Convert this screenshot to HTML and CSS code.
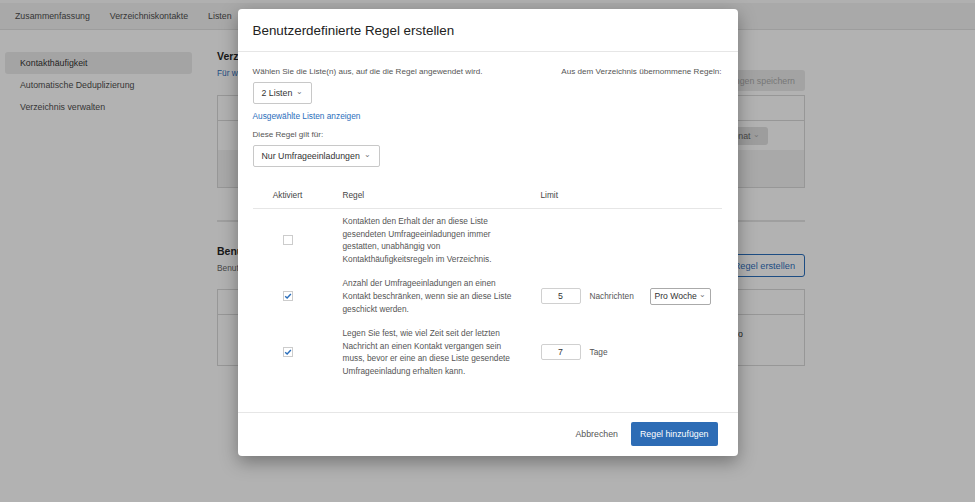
FILE: index.html
```html
<!DOCTYPE html>
<html lang="de">
<head>
    <meta charset="UTF-8">
    <meta name="viewport" content="width=device-width, initial-scale=1.0">
    <title>Kontakthäufigkeit</title>
    <link rel="stylesheet" href="styles.css">
</head>
<body>
    <!-- page behind the dialog, colours already dimmed by the backdrop -->
    <div class="app">
        <nav class="tabs">
            <a>Zusammenfassung</a>
            <a>Verzeichniskontakte</a>
            <a>Listen</a>
            <a>Segmente</a>
        </nav>
        <div class="layout">
            <aside class="sidebar">
                <a class="active">Kontakthäufigkeit</a>
                <a>Automatische Deduplizierung</a>
                <a>Verzeichnis verwalten</a>
            </aside>
            <main class="content">
                <section class="panel">
                    <div class="panel-head">
                        <div class="head-text">
                            <h2>Verzeichnisregeln</h2>
                            <a class="link">Für wen</a>
                        </div>
                        <button class="btn-muted" disabled>Änderungen speichern</button>
                    </div>
                    <div class="box">
                        <div class="box-head"></div>
                        <div class="box-row"><span class="pill">Pro Monat <span class="chev">&#8964;</span></span></div>
                        <div class="box-foot"></div>
                    </div>
                </section>
                <hr class="sep">
                <section class="panel">
                    <div class="panel-head second">
                        <div class="head-text">
                            <h2>Benutzerdefinierte Regeln</h2>
                            <p class="sub">Benutzerdefiniert</p>
                        </div>
                        <button class="btn-outline">Benutzerdefinierte Regel erstellen</button>
                    </div>
                    <div class="box">
                        <div class="box-head"></div>
                        <div class="box-row tall"><span class="cell-end">pro</span></div>
                    </div>
                </section>
            </main>
        </div>
    </div>

    <div class="overlay">
        <div class="modal">
            <div class="modal-head">Benutzerdefinierte Regel erstellen</div>
            <div class="modal-body">
                <div class="top-row">
                    <span class="label">Wählen Sie die Liste(n) aus, auf die die Regel angewendet wird.</span>
                    <span class="label">Aus dem Verzeichnis übernommene Regeln:</span>
                </div>
                <button class="dropdown">2 Listen <span class="chev">&#8964;</span></button>
                <a class="link show-lists">Ausgewählte Listen anzeigen</a>
                <div class="label applies">Diese Regel gilt für:</div>
                <button class="dropdown">Nur Umfrageeinladungen <span class="chev">&#8964;</span></button>

                <div class="rules">
                    <div class="rules-head">
                        <span class="col-check">Aktiviert</span>
                        <span class="col-rule">Regel</span>
                        <span class="col-limit">Limit</span>
                    </div>
                    <div class="rule">
                        <span class="col-check"><span class="checkbox"></span></span>
                        <span class="col-rule">Kontakten den Erhalt der an diese Liste gesendeten Umfrageeinladungen immer gestatten, unabhängig von Kontakthäufigkeitsregeln im Verzeichnis.</span>
                        <span class="col-limit"></span>
                    </div>
                    <div class="rule">
                        <span class="col-check"><span class="checkbox checked"><svg viewBox="0 0 10 10" width="10" height="10"><path d="M2.2 5.3 L4.1 7.1 L7.9 3" fill="none" stroke="#2a6ebb" stroke-width="1.4"/></svg></span></span>
                        <span class="col-rule">Anzahl der Umfrageeinladungen an einen Kontakt beschränken, wenn sie an diese Liste geschickt werden.</span>
                        <span class="col-limit">
                            <span class="num">5</span>
                            <span class="unit">Nachrichten</span>
                            <button class="dropdown small">Pro Woche <span class="chev">&#8964;</span></button>
                        </span>
                    </div>
                    <div class="rule">
                        <span class="col-check"><span class="checkbox checked"><svg viewBox="0 0 10 10" width="10" height="10"><path d="M2.2 5.3 L4.1 7.1 L7.9 3" fill="none" stroke="#2a6ebb" stroke-width="1.4"/></svg></span></span>
                        <span class="col-rule">Legen Sie fest, wie viel Zeit seit der letzten Nachricht an einen Kontakt vergangen sein muss, bevor er eine an diese Liste gesendete Umfrageeinladung erhalten kann.</span>
                        <span class="col-limit">
                            <span class="num">7</span>
                            <span class="unit">Tage</span>
                        </span>
                    </div>
                </div>
            </div>
            <div class="modal-foot">
                <button class="btn-text">Abbrechen</button>
                <button class="btn-primary">Regel hinzufügen</button>
            </div>
        </div>
    </div>
</body>
</html>
```

FILE: styles.css
```css
body {
    margin: 0;
    position: relative;
    font-family: "Liberation Sans", Arial, sans-serif;
    background: #b2b2b2;
    color: #242424;
}
button {
    font-family: inherit;
}
.app {
    height: 502px;
    overflow: hidden;
    background: #b2b2b2;
}
.tabs {
    display: flex;
    gap: 20px;
    height: 30px;
    align-items: center;
    padding: 0 15px;
    background: #a9a9a9;
    border-top: 3px solid #b0b0b0;
    border-bottom: 1px solid #9d9d9d;
    font-size: 8.8px;
    color: #353535;
    box-sizing: border-box;
}
.layout {
    display: flex;
}
.sidebar {
    width: 187px;
    margin-left: 5px;
    padding-top: 22px;
    display: flex;
    flex-direction: column;
}
.sidebar a {
    height: 22px;
    line-height: 22px;
    padding-left: 15px;
    font-size: 8.8px;
    color: #353535;
    border-radius: 3px;
}
.sidebar a.active {
    background: #a4a4a4;
    color: #242424;
}
.content {
    width: 588px;
    margin-left: 25px;
    padding-top: 19px;
}
.panel-head {
    display: flex;
    justify-content: space-between;
    align-items: flex-end;
    margin-bottom: 4px;
}
.head-text {
    padding-bottom: 12px;
}
.panel-head h2 {
    margin: 0;
    font-size: 10.5px;
    line-height: 14px;
    color: #181818;
}
.link {
    color: #2a6ebb;
    font-size: 8.3px;
    line-height: 12px;
    display: block;
}
.content .link {
    color: #1d4d83;
    margin-top: 4px;
}
.btn-muted {
    height: 21px;
    padding: 0 10px;
    border: none;
    border-radius: 3px;
    background: #a3a3a3;
    color: #777;
    font-size: 8.8px;
}
.box {
    border: 1px solid #979797;
}
.box-head {
    height: 24px;
    border-bottom: 1px solid #979797;
}
.box-row {
    height: 29px;
    display: flex;
    align-items: center;
    justify-content: flex-end;
    padding-right: 36px;
}
.pill {
    background: #9d9d9d;
    border-radius: 3px;
    padding: 4px 8px;
    font-size: 8.8px;
    color: #474747;
}
.box-foot {
    height: 37px;
    background: #a9a9a9;
}
.sep {
    margin: 32px 0 0;
    border: none;
    border-top: 2px solid #9f9f9f;
}
.panel-head.second {
    margin-top: 22px;
    margin-bottom: 12px;
}
.panel-head.second .head-text {
    padding-bottom: 3px;
}
.sub {
    margin: 4px 0 0;
    font-size: 8.3px;
    line-height: 12px;
    color: #474747;
}
.btn-outline {
    height: 23px;
    padding: 0 9px;
    border: 1px solid #1d4d83;
    border-radius: 3px;
    background: #b2b2b2;
    color: #1d4d83;
    font-size: 9.2px;
}
.box-row.tall {
    height: 50px;
    align-items: flex-start;
    padding-top: 14px;
    box-sizing: border-box;
    padding-right: 61px;
}
.cell-end {
    font-size: 8.8px;
    color: #242424;
}

/* modal */
.overlay {
    position: absolute;
    top: 0;
    left: 0;
    width: 100%;
    height: 502px;
    display: flex;
    justify-content: center;
    align-items: flex-start;
    padding-top: 9px;
    box-sizing: border-box;
}
.modal {
    width: 500px;
    background: #fff;
    border-radius: 4px;
    box-shadow: 0 6px 18px rgba(0, 0, 0, 0.35);
}
.modal-head {
    height: 42px;
    line-height: 43px;
    padding-left: 15px;
    font-size: 13.4px;
    color: #222;
    border-bottom: 1px solid #e6e6e6;
}
.modal-body {
    padding: 14px 16px 28px 15px;
    display: flex;
    flex-direction: column;
    align-items: flex-start;
}
.top-row {
    display: flex;
    justify-content: space-between;
    align-self: stretch;
    margin-bottom: 4px;
}
.label {
    font-size: 8.1px;
    line-height: 12px;
    color: #555;
}
.dropdown {
    height: 22px;
    padding: 0 8px;
    border: 1px solid #c8c8c8;
    border-radius: 2px;
    background: #fff;
    color: #333;
    font-size: 8.8px;
    display: flex;
    align-items: center;
    gap: 4px;
}
.chev {
    font-size: 8px;
    color: #777;
    position: relative;
    top: -2px;
}
.show-lists {
    margin-top: 6px;
}
.applies {
    margin-top: 7px;
    margin-bottom: 4px;
}
.rules {
    align-self: stretch;
    margin-top: 22px;
}
.rules-head,
.rule {
    display: grid;
    grid-template-columns: 70px 218px 1fr;
    align-items: center;
}
.rules-head {
    padding-bottom: 7px;
    border-bottom: 1px solid #e6e6e6;
    font-size: 8.3px;
    line-height: 12px;
    color: #444;
}
.rule {
    padding: 6px 0;
    font-size: 8.3px;
    line-height: 12.6px;
    color: #555;
}
.col-check {
    display: flex;
    justify-content: center;
}
.col-rule {
    padding: 0 28px 0 20px;
}
.col-limit {
    display: flex;
    align-items: center;
}
.checkbox {
    width: 10px;
    height: 10px;
    border: 1px solid #ccc;
    box-sizing: border-box;
    display: flex;
    align-items: center;
    justify-content: center;
    background: #fff;
}
.checkbox svg {
    flex: none;
}
.num {
    width: 40px;
    height: 16px;
    line-height: 15px;
    border: 1px solid #d0d0d0;
    border-radius: 2px;
    text-align: center;
    color: #333;
    font-size: 8.8px;
    box-sizing: border-box;
}
.unit {
    width: 60px;
    margin-left: 9px;
    font-size: 8.3px;
    color: #555;
}
.dropdown.small {
    height: 17px;
    padding: 0 4px;
    gap: 2px;
    font-size: 8.6px;
    border-color: #aaa;
}
.modal-foot {
    height: 43px;
    border-top: 1px solid #e6e6e6;
    display: flex;
    justify-content: flex-end;
    align-items: center;
    gap: 6px;
    padding-right: 20px;
}
.btn-text {
    border: none;
    background: none;
    color: #555;
    font-size: 8.8px;
    padding: 0 7px;
}
.btn-primary {
    height: 24px;
    padding: 0 9px;
    border: none;
    border-radius: 2px;
    background: #2d6cb5;
    color: #fff;
    font-size: 8.8px;
}
```
